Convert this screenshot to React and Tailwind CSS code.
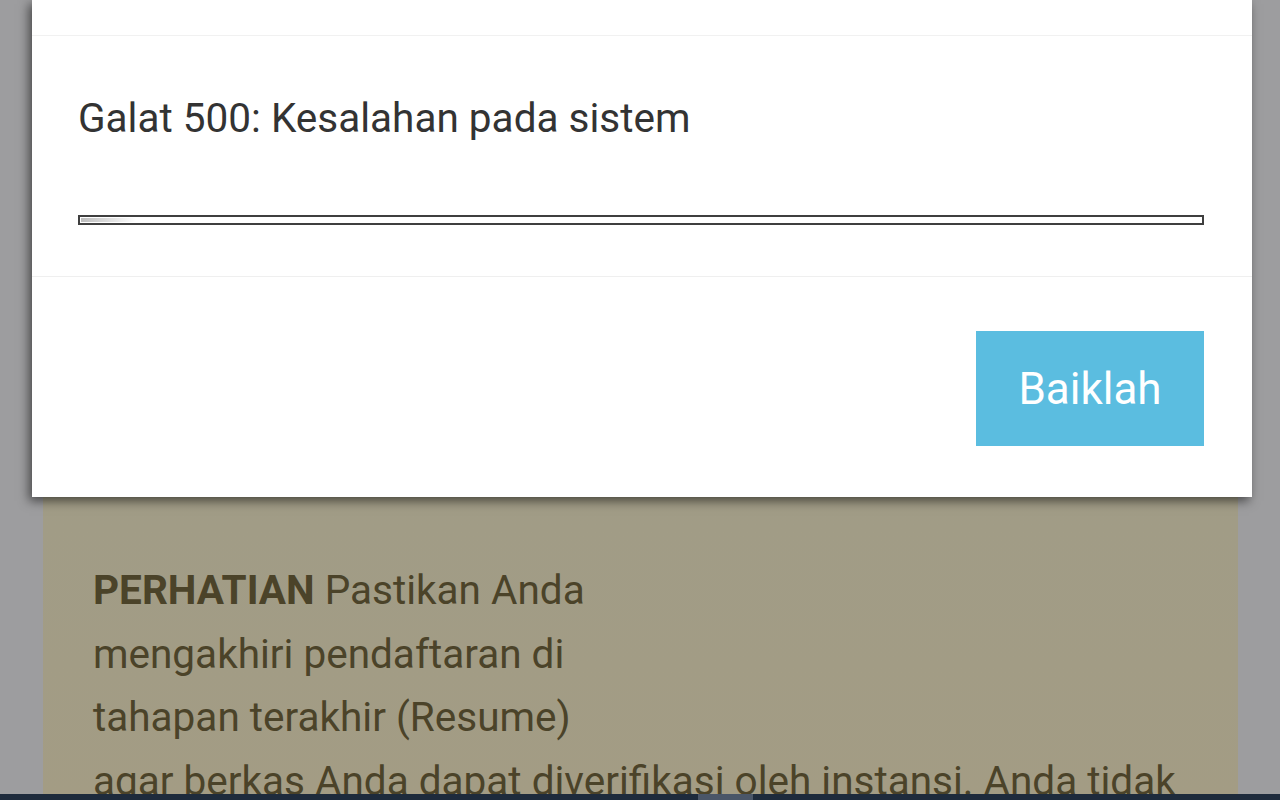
import React from 'react';

export default function App() {
  return (
    <div
      className="relative h-[800px] w-full overflow-hidden bg-[#9d9d9f]"
      style={{ fontFamily: 'Roboto, "Liberation Sans", sans-serif' }}
    >
      {/* halaman di belakang dialog */}
      <div className="mx-[43px] mr-[42px] h-full bg-gradient-to-b from-[#8f8b7c] via-[#a09c87] to-[#a39c84] pl-[50px] pt-[559px]">
        <p className="whitespace-nowrap text-[40.5px] leading-[63.7px] text-[#4b4329]">
          <span className="font-bold">PERHATIAN</span> Pastikan Anda
          <br />
          mengakhiri pendaftaran di
          <br />
          tahapan terakhir (Resume)
          <br />
          agar berkas Anda dapat diverifikasi oleh instansi. Anda tidak
        </p>
      </div>

      {/* dialog */}
      <div className="absolute left-[32px] right-[28px] top-0 flex h-[497px] flex-col bg-white shadow-[-3px_4px_10px_rgba(0,0,0,0.55)]">
        <div className="h-[36px] border-b border-[#f1f1f1]" />
        <div className="flex h-[241px] flex-col border-b border-[#efefef] pl-[46px] pr-[48px] pt-[60px]">
          <p className="text-[40.5px] leading-[44px] text-[#333333]">Galat 500: Kesalahan pada sistem</p>
          <div className="mt-[75px] h-[10px] w-full border-2 border-[#3f3f3f] bg-white p-[1px]">
            <div className="h-full w-[55px] bg-gradient-to-r from-[#bdbdbd] to-white" />
          </div>
        </div>
        <div className="flex flex-1 justify-end pr-[48px] pt-[54px]">
          <button className="flex h-[115px] w-[228px] items-center justify-center bg-[#5bbde0] text-[44px] text-white">
            Baiklah
          </button>
        </div>
      </div>

      {/* bilah bawah */}
      <div className="absolute bottom-0 left-0 right-0 flex h-[6px] bg-[#1e2b3c]">
        <div className="ml-[698px] h-full w-[55px] bg-[#4a5668]" />
      </div>
    </div>
  );
}
